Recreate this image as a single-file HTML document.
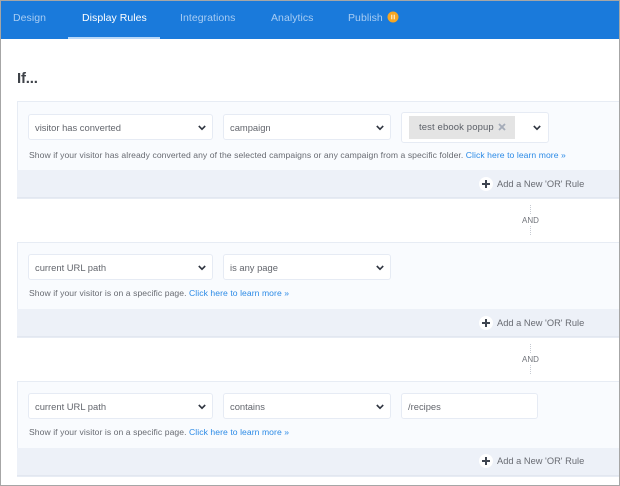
<!DOCTYPE html>
<html><head><meta charset="utf-8"><style>
html,body{margin:0;padding:0;background:#fff}
body{width:620px;height:486px;position:relative;overflow:hidden;font-family:"Liberation Sans",sans-serif;color:#5c6068}
.a{position:absolute;white-space:nowrap}
#frame{position:absolute;left:0;top:0;width:618px;height:484px;border:1px solid #a6a6a6;z-index:9}
#nav{position:absolute;left:1px;top:1px;width:618px;height:38px;background:#1a7adb}
.t{position:absolute;top:10px;font-size:10.5px;line-height:14px;color:#a9cdf3;letter-spacing:.05px}
#ul{position:absolute;left:68px;top:37px;width:92px;height:2px;background:#b9d8f8}
.card{position:absolute;left:17px;width:610px;background:#f9fbfe;border:1px solid #e7ecf4;box-sizing:border-box}
.foot{position:absolute;left:17px;width:610px;height:28px;background:#edf1f8;border-bottom:1px solid #e2e7f0;box-sizing:border-box}
.sel{position:absolute;height:26px;background:#fff;border:1px solid #e6ebf4;border-radius:3px;box-sizing:border-box;font-size:9.4px;line-height:26px;padding-left:6px;color:#63666d}
.sel svg{position:absolute}
.help{position:absolute;left:29px;font-size:8.6px;line-height:12px;color:#686b72;white-space:nowrap;letter-spacing:.065px}
.help b{font-weight:normal;color:#2b8ae6}
.add{position:absolute;left:497px;font-size:9.3px;line-height:12px;color:#686b72;white-space:nowrap}
.plus{position:absolute;left:479px;width:14px;height:14px;border-radius:50%;background:#fff}
.plus:before{content:"";position:absolute;left:3px;top:6px;width:8px;height:2px;background:#3f4550}
.plus:after{content:"";position:absolute;left:6px;top:3px;width:2px;height:8px;background:#3f4550}
.and{position:absolute;left:520px;width:21px;text-align:center;font-size:8px;line-height:9px;color:#70737a}
.dot{position:absolute;left:530px;width:0;height:9px;border-left:1px dotted #c6cad2}
</style></head><body>
<div id="frame"></div>
<div id="nav">
<span class="t" style="left:12px">Design</span>
<span class="t" style="left:81px;color:#fff">Display Rules</span>
<span class="t" style="left:179px">Integrations</span>
<span class="t" style="left:270px">Analytics</span>
<span class="t" style="left:347px">Publish</span>
<svg class="a" style="left:386px;top:10px" width="12" height="12"><circle cx="6" cy="6" r="5.5" fill="#f6a623"/><rect x="4" y="3.7" width="1.4" height="4.6" fill="#fde3b5"/><rect x="6.6" y="3.7" width="1.4" height="4.6" fill="#fde3b5"/></svg>
</div>
<div id="ul"></div>
<div class="a" style="left:17px;top:70px;font-size:15px;line-height:18px;font-weight:bold;color:#3f4349;letter-spacing:-.2px">If...</div>

<div class="card" style="top:101px;height:98px"></div>
<div class="foot" style="top:170px"></div>
<div class="sel" style="left:28px;top:114px;width:185px">visitor has converted<svg style="left:169px;top:10px" width="8" height="6"><path d="M.8 1l3.2 3.2L7.2 1" fill="none" stroke="#2f3540" stroke-width="1.6"/></svg></div>
<div class="sel" style="left:223px;top:114px;width:168px">campaign<svg style="left:152px;top:10px" width="8" height="6"><path d="M.8 1l3.2 3.2L7.2 1" fill="none" stroke="#2f3540" stroke-width="1.6"/></svg></div>
<div class="sel" style="left:401px;top:112px;width:148px;height:31px"></div>
<div class="a" style="left:409px;top:116px;width:106px;height:23px;background:#e4e4e4;font-size:9.5px;line-height:23px;color:#5c6068;text-indent:10px;letter-spacing:.12px">test ebook popup</div>
<svg class="a" style="left:498px;top:123px" width="8" height="8"><path d="M1 1l6 6M7 1L1 7" stroke="#a4abb8" stroke-width="1.8"/></svg>
<svg class="a" style="left:533px;top:125px" width="8" height="6"><path d="M.8 1l3.2 3.2L7.2 1" fill="none" stroke="#2f3540" stroke-width="1.6"/></svg>
<div class="help" style="top:149px">Show if your visitor has already converted any of the selected campaigns or any campaign from a specific folder. <b>Click here to learn more »</b></div>
<div class="plus" style="top:177px"></div>
<div class="add" style="top:178px">Add a New 'OR' Rule</div>

<div class="dot" style="top:205px"></div>
<div class="and" style="top:216px">AND</div>
<div class="dot" style="top:226px"></div>

<div class="card" style="top:242px;height:96px"></div>
<div class="foot" style="top:309px"></div>
<div class="sel" style="left:28px;top:254px;width:185px">current URL path<svg style="left:169px;top:10px" width="8" height="6"><path d="M.8 1l3.2 3.2L7.2 1" fill="none" stroke="#2f3540" stroke-width="1.6"/></svg></div>
<div class="sel" style="left:223px;top:254px;width:168px">is any page<svg style="left:152px;top:10px" width="8" height="6"><path d="M.8 1l3.2 3.2L7.2 1" fill="none" stroke="#2f3540" stroke-width="1.6"/></svg></div>
<div class="help" style="top:287px">Show if your visitor is on a specific page. <b>Click here to learn more »</b></div>
<div class="plus" style="top:316px"></div>
<div class="add" style="top:317px">Add a New 'OR' Rule</div>

<div class="dot" style="top:344px"></div>
<div class="and" style="top:355px">AND</div>
<div class="dot" style="top:365px"></div>

<div class="card" style="top:381px;height:96px"></div>
<div class="foot" style="top:448px"></div>
<div class="sel" style="left:28px;top:393px;width:185px">current URL path<svg style="left:169px;top:10px" width="8" height="6"><path d="M.8 1l3.2 3.2L7.2 1" fill="none" stroke="#2f3540" stroke-width="1.6"/></svg></div>
<div class="sel" style="left:223px;top:393px;width:168px">contains<svg style="left:152px;top:10px" width="8" height="6"><path d="M.8 1l3.2 3.2L7.2 1" fill="none" stroke="#2f3540" stroke-width="1.6"/></svg></div>
<div class="sel" style="left:401px;top:393px;width:137px">/recipes</div>
<div class="help" style="top:426px">Show if your visitor is on a specific page. <b>Click here to learn more »</b></div>
<div class="plus" style="top:454px"></div>
<div class="add" style="top:455px">Add a New 'OR' Rule</div>
</body></html>
